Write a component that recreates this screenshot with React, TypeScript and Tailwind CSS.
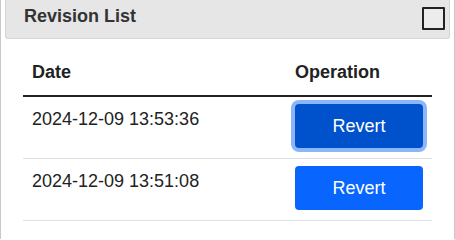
import { useState } from "react";

type Revision = { id: number; date: string };

const revisions: Revision[] = [
  { id: 2, date: "2024-12-09 13:53:36" },
  { id: 1, date: "2024-12-09 13:51:08" },
];

export default function App() {
  const [done, setDone] = useState<boolean>(false);

  return (
    <div
      className="w-[455px] h-[240px] bg-white border-x border-[#c8c8c8] pl-1 pr-[4px] text-[#222]"
      style={{ fontFamily: '"Liberation Sans", Arial, sans-serif' }}
    >
      <div className="h-[40px] bg-[#e6e6e6] border border-t-0 border-[#d6d6d6] rounded-b-[3px] flex items-center justify-between pl-[18px] pr-[4px] -mt-px">
        <h2 className="text-[18px] font-bold text-[#333] leading-none mb-[5px]">Revision List</h2>
        <button
          onClick={() => setDone(!done)}
          className="w-[23px] h-[23px] border-2 border-[#222] bg-[#ececec] rounded-[1px] mb-[1px]"
          aria-label="toggle"
        />
      </div>

      <div className="px-[18px] pt-[12px]">
        <table className="w-full border-collapse text-[18px] leading-[27px]">
          <thead>
            <tr className="border-b-2 border-[#222]">
              <th className="text-left font-bold px-[9px] pt-[8px] pb-[9px]">Date</th>
              <th className="text-left font-bold px-[9px] pt-[8px] pb-[9px] w-[146px]">Operation</th>
            </tr>
          </thead>
          <tbody>
            {revisions.map((r, i) => (
              <tr key={r.id} className="border-b border-[#dee2e6]">
                <td className="align-top px-[9px] pt-[9px] pb-[10px]">{r.date}</td>
                <td className="align-top px-[9px] pt-[7px] pb-[10px]">
                  <button
                    className={
                      i === 0
                        ? "block w-[128px] h-[44px] rounded-[4px] bg-[#0052cc] text-white text-[18px] ring-4 ring-[#8cb6fb]"
                        : "block w-[128px] h-[44px] rounded-[4px] bg-[#0866ff] text-white text-[18px]"
                    }
                  >
                    Revert
                  </button>
                </td>
              </tr>
            ))}
          </tbody>
        </table>
      </div>
    </div>
  );
}
